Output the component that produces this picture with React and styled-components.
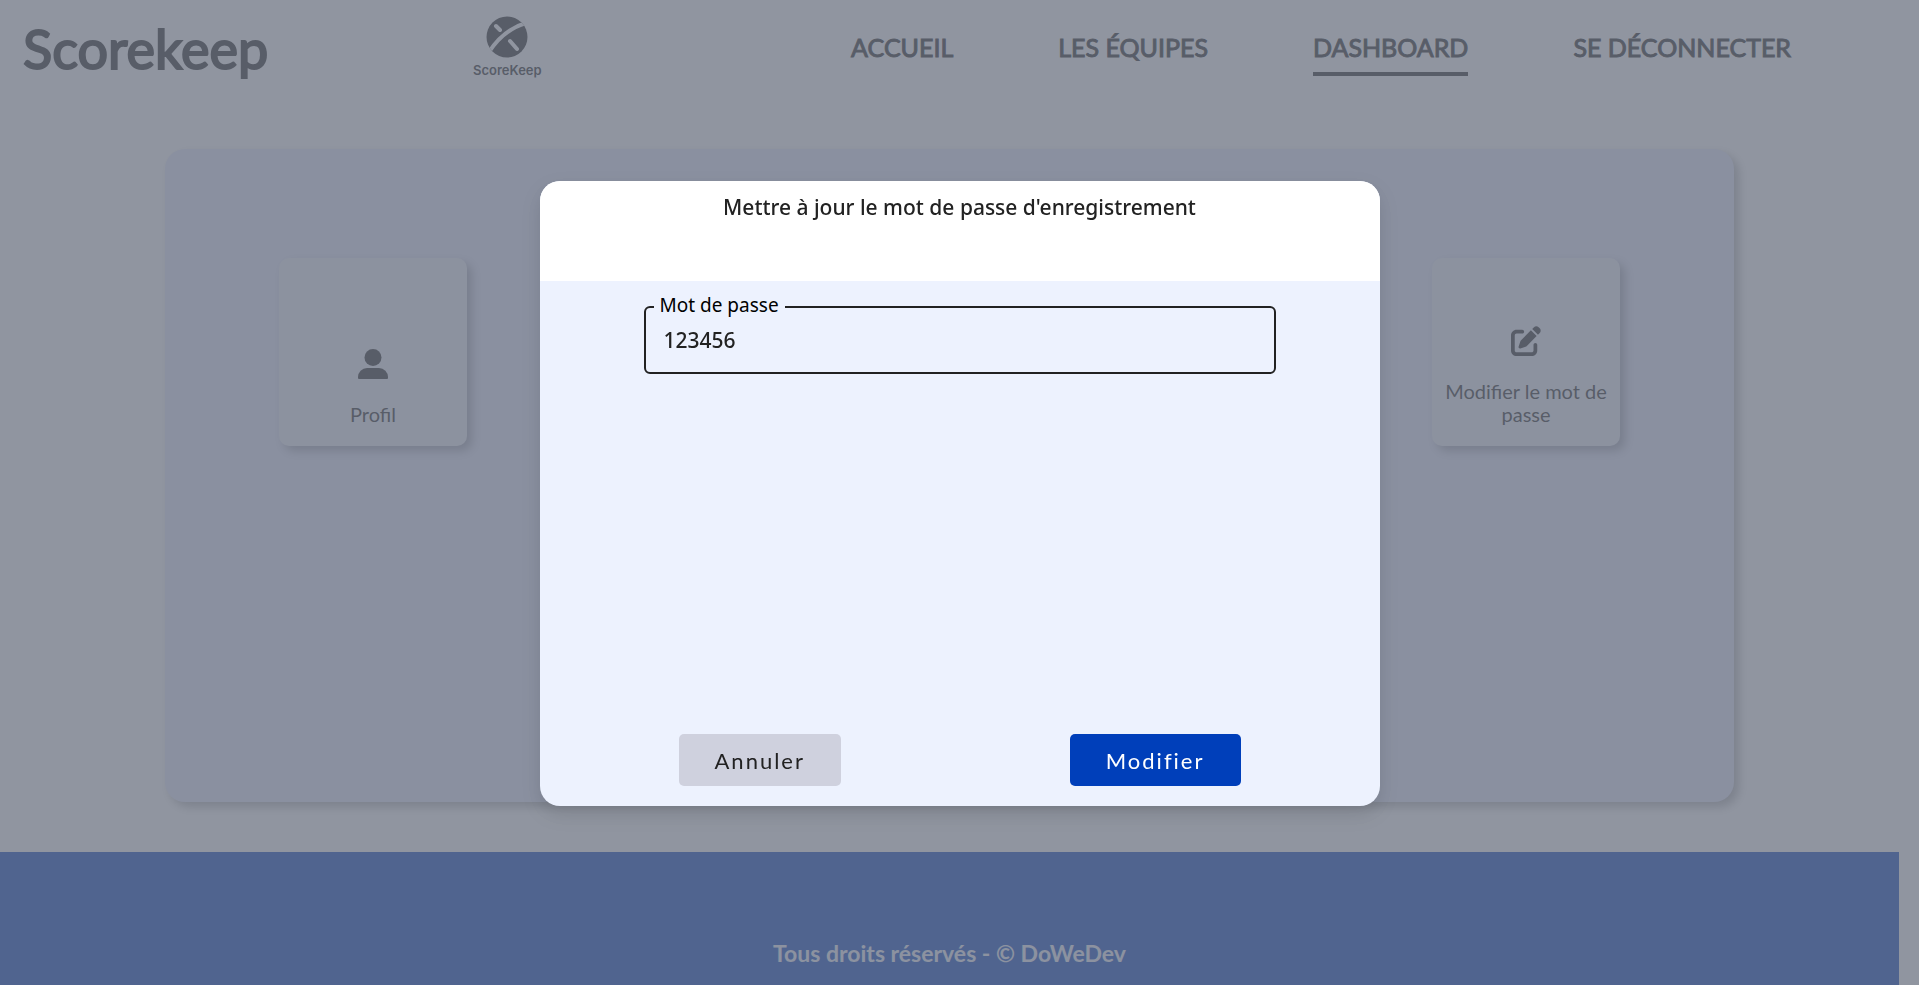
import React, { useState } from "react";
import styled, { createGlobalStyle } from "styled-components";
import { FaPenToSquare } from "react-icons/fa6";

const GlobalStyle = createGlobalStyle`
  *, *::before, *::after { box-sizing: border-box; }
  body {
    margin: 0;
    background: #fff;
    color: #222;
    font-family: Lato, "Liberation Sans", sans-serif;
    overflow: hidden;
  }
  button, input { font: inherit; color: inherit; }
  h1, h2, p { margin: 0; }
`;

const Page = styled.div`
  display: flex;
  flex-direction: column;
  height: 100vh;
  padding-right: 20px;
  overflow: hidden;
`;

const Header = styled.header`
  display: flex;
  align-items: center;
  flex: none;
  height: 98px;
  padding: 0 108px 0 23px;
`;

const Brand = styled.h1`
  width: 450px;
  font-size: 54px;
  line-height: 64px;
  font-weight: 400;
  -webkit-text-stroke: 2px currentColor;
`;

const LogoLink = styled.a`
  display: flex;
  flex-direction: column;
  align-items: center;
  gap: 4px;
  padding-bottom: 4px;
  color: inherit;
  text-decoration: none;
  font: 600 13px/16px Inter, sans-serif;
`;

const Nav = styled.nav`
  display: flex;
  gap: 105px;
  margin-left: auto;
`;

const NavLink = styled.a`
  padding: 4px 0;
  color: inherit;
  text-decoration: none;
  font-size: 25px;
  line-height: 42px;
  font-weight: 400;
  -webkit-text-stroke: 1px currentColor;
  border-bottom: 4px solid ${(p) => (p.$active ? "currentColor" : "transparent")};
`;

const Panel = styled.main`
  display: flex;
  justify-content: space-between;
  align-items: flex-start;
  flex: none;
  height: 653px;
  margin: 51px 165px 0;
  padding: 109px 114px;
  border-radius: 20px;
  background: #e6eafe;
  box-shadow: 5px 5px 10px rgba(0, 0, 0, 0.3);
`;

const Card = styled.a`
  display: flex;
  flex-direction: column;
  justify-content: flex-end;
  align-items: center;
  gap: 24px;
  width: 188px;
  height: 188px;
  padding: 8px 12px 20px;
  border-radius: 10px;
  background: #eef2fb;
  box-shadow: 5px 5px 10px rgba(0, 0, 0, 0.3);
  color: inherit;
  text-decoration: none;
  font-size: 20px;
  line-height: 23px;
  text-align: center;
`;

const Footer = styled.footer`
  flex: 1 0 133px;
  margin-top: 50px;
  padding-top: 87px;
  background: #003fba;
  color: #eef2ff;
  text-align: center;
  font-size: 23px;
  line-height: 28px;
  font-weight: 700;
`;

const Overlay = styled.div`
  position: fixed;
  inset: 0;
  display: flex;
  align-items: center;
  justify-content: center;
  padding-top: 2px;
  background: rgba(107, 114, 128, 0.75);
`;

const Dialog = styled.form`
  display: flex;
  flex-direction: column;
  width: 840px;
  height: 625px;
  border-radius: 20px;
  overflow: hidden;
  background: #edf2fe;
  box-shadow: 0 8px 20px rgba(0, 0, 0, 0.12);
`;

const DialogTitle = styled.h2`
  height: 100px;
  padding-top: 8px;
  background: #fff;
  text-align: center;
  font: 500 21px/36px "Noto Sans", sans-serif;
`;

const Field = styled.div`
  position: relative;
  margin: 25px 104px 0;
`;

const FieldLabel = styled.label`
  position: absolute;
  top: -14px;
  left: 10px;
  padding: 0 6px;
  background: #edf2fe;
  color: #000;
  font: 400 19px/26px "Noto Sans", sans-serif;
`;

const TextInput = styled.input`
  width: 100%;
  height: 68px;
  padding: 0 18px;
  border: 2px solid #222;
  border-radius: 6px;
  outline: none;
  background: transparent;
  font: 500 21px/28px "Noto Sans", sans-serif;
`;

const Actions = styled.div`
  display: flex;
  justify-content: space-between;
  margin: auto 139px 20px;
`;

const Button = styled.button`
  height: 52px;
  padding: 0 36px;
  border: 0;
  border-radius: 5px;
  background: ${(p) => (p.$primary ? "#003fba" : "#cfd1de")};
  color: ${(p) => (p.$primary ? "#fff" : "#222")};
  font-size: 22px;
  letter-spacing: 2px;
`;

function BallLogo() {
  return (
    <svg width="42" height="42" viewBox="0 0 42 42" aria-hidden="true">
      <defs>
        <clipPath id="ball"><circle cx="21" cy="21" r="20.500" /></clipPath>
      </defs>
      <circle cx="21" cy="21" r="20.500" fill="currentColor" />
      <g fill="none" stroke="#fff" clipPath="url(#ball)">
        <path d="M3 36C12 22 23 12 40 7" strokeWidth="4" />
        <path d="M10 10l4 4M24 25l7 8" strokeWidth="4" strokeLinecap="round" />
      </g>
    </svg>
  );
}

function PersonIcon() {
  return (
    <svg width="30" height="30" viewBox="0 0 30 30" fill="currentColor" aria-hidden="true">
      <circle cx="15" cy="8.500" r="8.500" />
      <path d="M9 19h12a9 9 0 0 1 9 9v1a1 1 0 0 1-1 1H1a1 1 0 0 1-1-1v-1a9 9 0 0 1 9-9z" />
    </svg>
  );
}

const links = ["ACCUEIL", "LES ÉQUIPES", "DASHBOARD", "SE DÉCONNECTER"];

export default function App() {
  const [password, setPassword] = useState("123456");
  return (
    <>
      <GlobalStyle />
      <Page>
        <Header>
          <Brand>Scorekeep</Brand>
          <LogoLink href="#"><BallLogo />ScoreKeep</LogoLink>
          <Nav>
            {links.map((l) => (
              <NavLink key={l} href="#" $active={l === "DASHBOARD"}>{l}</NavLink>
            ))}
          </Nav>
        </Header>
        <Panel>
          <Card href="#"><PersonIcon />Profil</Card>
          <Card href="#"><FaPenToSquare size={30} />Modifier le mot de passe</Card>
        </Panel>
        <Footer>Tous droits réservés - © DoWeDev</Footer>
      </Page>
      <Overlay>
        <Dialog role="dialog" aria-modal="true" aria-labelledby="dialog-title" onSubmit={(e) => e.preventDefault()}>
          <DialogTitle id="dialog-title">Mettre à jour le mot de passe d'enregistrement</DialogTitle>
          <Field>
            <TextInput id="password" value={password} onChange={(e) => setPassword(e.target.value)} />
            <FieldLabel htmlFor="password">Mot de passe</FieldLabel>
          </Field>
          <Actions>
            <Button type="button">Annuler</Button>
            <Button type="submit" $primary>Modifier</Button>
          </Actions>
        </Dialog>
      </Overlay>
    </>
  );
}
